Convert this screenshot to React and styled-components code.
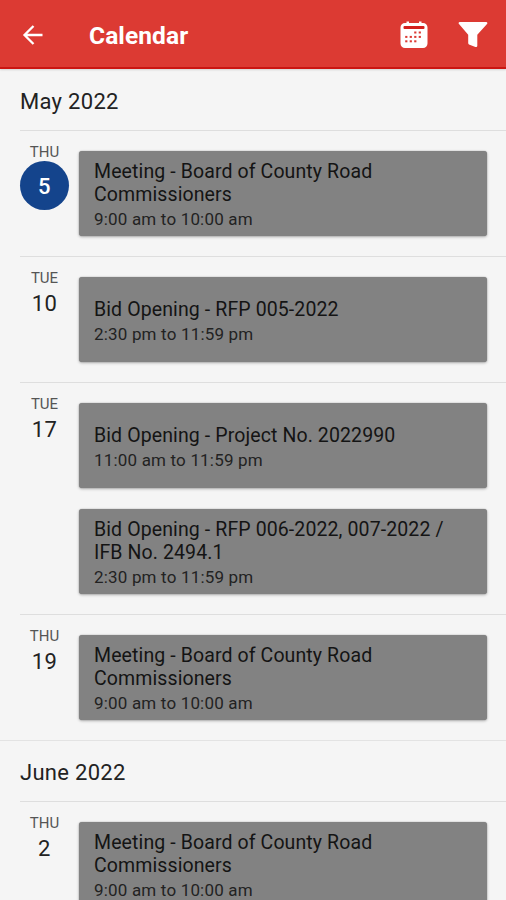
import React from "react";
import styled, { createGlobalStyle } from "styled-components";

const GlobalStyle = createGlobalStyle`
  * { box-sizing: border-box; }
  body { margin: 0; background: #f5f5f5; font-family: Roboto, sans-serif; color: #222; }
`;

const Screen = styled.div`
  height: 900px;
  overflow: hidden;
  display: flex;
  flex-direction: column;
  background: #f5f5f5;
`;

const AppBar = styled.header`
  flex: none;
  height: 69px;
  padding: 2px 18px 0 20px;
  display: flex;
  align-items: center;
  background: #dc3a33;
  border-bottom: 2px solid #cb1512;
  box-shadow: 0 1px 2px rgba(0, 0, 0, 0.14);
  color: #fff;
`;

const IconButton = styled.button`
  display: flex;
  padding: 0;
  border: 0;
  background: none;
  color: inherit;
  & + & { margin-left: 30px; }
`;

const Title = styled.h1`
  flex: 1;
  margin: 2px 0 0 43px;
  font-size: 24.5px;
  line-height: 28px;
  font-weight: 700;
  letter-spacing: 0.1px;
`;

const Month = styled.section`
  flex: none;
  & + & { border-top: 1px solid #e3e3e3; }
`;

const MonthName = styled.h2`
  margin: 0;
  height: ${(p) => (p.$first ? 61 : 60)}px;
  padding: 3px 20px 0;
  display: flex;
  align-items: center;
  font-size: 22px;
  font-weight: 400;
  letter-spacing: 0.3px;
`;

const Day = styled.div`
  display: flex;
  margin-left: 20px;
  border-top: 1px solid #dedede;
  padding: 0 19px 20px 0;
`;

const DateColumn = styled.div`
  width: 49px;
  margin-right: 10px;
  padding-top: 12px;
  display: flex;
  flex-direction: column;
  align-items: center;
`;

const Weekday = styled.span`
  font-size: 15px;
  line-height: 18px;
  color: #555;
`;

const DayNumber = styled.span`
  width: 49px;
  height: ${(p) => (p.$selected ? 49 : 33)}px;
  padding-top: ${(p) => (p.$selected ? 2 : 0)}px;
  border-radius: 50%;
  display: flex;
  align-items: center;
  justify-content: center;
  font-size: 22px;
  letter-spacing: 0.4px;
  font-weight: ${(p) => (p.$selected ? 500 : 400)};
  color: ${(p) => (p.$selected ? "#fff" : "#222")};
  background: ${(p) => (p.$selected ? "#14448c" : "transparent")};
`;

const Events = styled.div`
  flex: 1;
  padding-top: 20px;
  display: flex;
  flex-direction: column;
  gap: 21px;
`;

const EventCard = styled.article`
  height: 85px;
  padding: 3px 15px 0;
  display: flex;
  flex-direction: column;
  justify-content: center;
  border-radius: 3px;
  background: #828282;
  box-shadow: 0 0 1px rgba(0, 0, 0, 0.4), 0 1px 3px rgba(0, 0, 0, 0.3);
  color: #141414;
`;

const EventTitle = styled.div`
  font-size: 19.5px;
  line-height: 23px;
  letter-spacing: 0.11px;
`;

const EventTime = styled.div`
  margin-top: 2px;
  font-size: 17px;
  line-height: 22px;
  letter-spacing: 0.18px;
  color: #222;
`;

const BackIcon = () => (
  <svg width="26" height="26" viewBox="0 0 26 26" fill="none" stroke="currentColor" strokeWidth="2.3">
    <path d="M22.500 13H4.500M13.500 4L4.500 13L13.500 22" />
  </svg>
);

const calendarDots = [
  [15.3, 11.5], [19.8, 11.5],
  [6.3, 15.9], [10.8, 15.9], [15.3, 15.9], [19.8, 15.9],
  [6.3, 20.3], [10.8, 20.3], [15.3, 20.3],
];

const CalendarIcon = () => (
  <svg width="28" height="28" viewBox="0 0 28 28">
    <path fill="currentColor" d="M5 2h1.500V.5h2.500V2h10V.5h2.500V2H23a4.500 4.500 0 0 1 4.500 4.500v16A4.500 4.500 0 0 1 23 27H5a4.500 4.500 0 0 1-4.500-4.500v-16A4.500 4.500 0 0 1 5 2Z" />
    <rect x="3.500" y="5" width="21" height="3" rx="1" fill="#d3201d" />
    {calendarDots.map(([x, y]) => (
      <rect key={`${x}-${y}`} x={x - 1.1} y={y - 1} width="2.2" height="2" fill="#dc3a33" />
    ))}
  </svg>
);

const FilterIcon = () => (
  <svg width="30" height="27" viewBox="0 0 30 27" fill="currentColor">
    <path d="M1.800 1h26.400c1.200 0 1.600 1.200.8 2.100L19.300 13.800v11c0 1-.9 1.500-1.900 1.200l-5.800-2.200c-.9-.4-1.400-.9-1.400-1.700v-8.300L1 3.100C.2 2.200.6 1 1.800 1Z" />
  </svg>
);

const meeting = {
  title: "Meeting - Board of County Road Commissioners",
  time: "9:00 am to 10:00 am",
};

const months = [
  {
    name: "May 2022",
    days: [
      { weekday: "THU", date: 5, selected: true, events: [meeting] },
      { weekday: "TUE", date: 10, events: [{ title: "Bid Opening - RFP 005-2022", time: "2:30 pm to 11:59 pm" }] },
      {
        weekday: "TUE",
        date: 17,
        events: [
          { title: "Bid Opening - Project No. 2022990", time: "11:00 am to 11:59 pm" },
          { title: "Bid Opening - RFP 006-2022, 007-2022 / IFB No. 2494.1", time: "2:30 pm to 11:59 pm" },
        ],
      },
      { weekday: "THU", date: 19, events: [meeting] },
    ],
  },
  { name: "June 2022", days: [{ weekday: "THU", date: 2, events: [meeting] }] },
];

export default function App() {
  return (
    <Screen>
      <GlobalStyle />
      <AppBar>
        <IconButton aria-label="Back"><BackIcon /></IconButton>
        <Title>Calendar</Title>
        <IconButton aria-label="Month view"><CalendarIcon /></IconButton>
        <IconButton aria-label="Filter"><FilterIcon /></IconButton>
      </AppBar>
      {months.map((month, i) => (
        <Month key={month.name}>
          <MonthName $first={i === 0}>{month.name}</MonthName>
          {month.days.map((day) => (
            <Day key={day.date}>
              <DateColumn>
                <Weekday>{day.weekday}</Weekday>
                <DayNumber $selected={day.selected}>{day.date}</DayNumber>
              </DateColumn>
              <Events>
                {day.events.map((event) => (
                  <EventCard key={event.title}>
                    <EventTitle>{event.title}</EventTitle>
                    <EventTime>{event.time}</EventTime>
                  </EventCard>
                ))}
              </Events>
            </Day>
          ))}
        </Month>
      ))}
    </Screen>
  );
}
